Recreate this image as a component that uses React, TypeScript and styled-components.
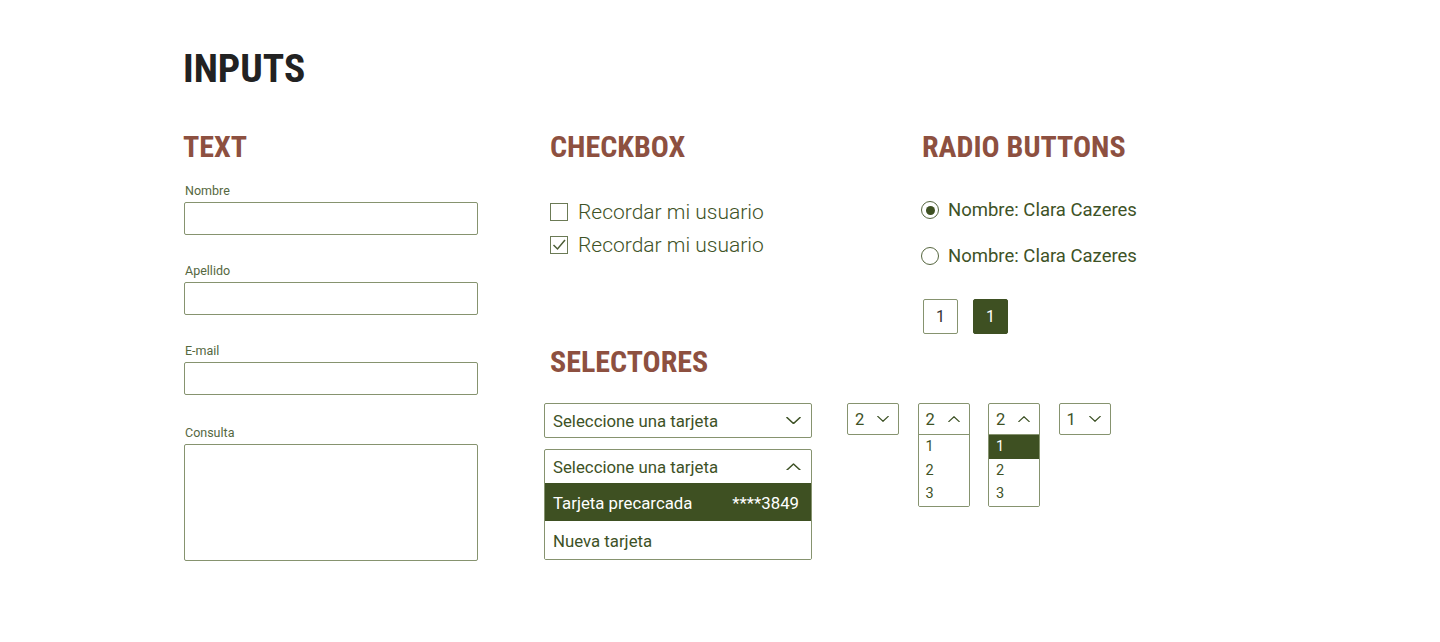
import React from "react";
import styled, { createGlobalStyle } from "styled-components";

const GREEN = "#3e5226";
const DARK = "#3e5022";
const BORDER = "#86936f";
const BROWN = "#8d5040";

const Global = createGlobalStyle`
  html, body { margin: 0; padding: 0; background: #fff; }
  body { font-family: Roboto, "Noto Sans", sans-serif; color: ${GREEN}; }
  * { box-sizing: border-box; }
`;

const Page = styled.div`
  padding: 49px 0 0 183px;
  width: 1440px;
  height: 642px;
  overflow: hidden;
`;

const Title = styled.h1`
  margin: 0;
  font-family: "Roboto Condensed", Roboto, sans-serif;
  font-weight: 700;
  font-size: 39.5px;
  line-height: 40px;
  color: #222;
`;

const Grid = styled.div`
  margin-top: 42px;
  display: grid;
  grid-template-columns: 367px 372px 1fr;
  grid-template-areas:
    "text check radio"
    "text select select";
  grid-template-rows: auto 1fr;
  row-gap: 12px;
`;

const Area = styled.section<{ $area: string }>`
  grid-area: ${(p) => p.$area};
  display: flex;
  flex-direction: column;
`;

const SectionTitle = styled.h2`
  margin: 0;
  font-family: "Roboto Condensed", Roboto, sans-serif;
  font-weight: 700;
  font-size: 30px;
  line-height: 31px;
  color: ${BROWN};
`;

const Fields = styled.div`
  margin-top: 21px;
  display: flex;
  flex-direction: column;
  gap: 28px;
  padding-left: 1px;
`;

const Field = styled.label<{ $extra?: number }>`
  display: flex;
  flex-direction: column;
  margin-top: ${(p) => p.$extra ?? 0}px;
`;

const Label = styled.span`
  font-size: 12.5px;
  line-height: 15px;
  color: #55683f;
  margin-bottom: 4px;
  padding-left: 1px;
`;

const Input = styled.input`
  width: 294px;
  height: 33px;
  border: 1px solid ${BORDER};
  border-radius: 2px;
  outline: none;
  background: #fff;
`;

const TextArea = styled.textarea`
  width: 294px;
  height: 117px;
  border: 1px solid ${BORDER};
  border-radius: 2px;
  outline: none;
  resize: none;
  background: #fff;
`;

const CheckList = styled.div`
  margin-top: 33px;
  display: flex;
  flex-direction: column;
`;

const CheckRow = styled.div`
  display: flex;
  align-items: center;
  gap: 10px;
  height: 33px;
  font-size: 21px;
  font-weight: 300;
  color: ${GREEN};
`;

const Box = styled.span`
  width: 18px;
  height: 18px;
  border: 1.5px solid #6b7a55;
  display: inline-flex;
  align-items: center;
  justify-content: center;
`;

const RadioList = styled.div`
  margin-top: 36px;
  display: flex;
  flex-direction: column;
  gap: 22px;
`;

const RadioRow = styled.div`
  display: flex;
  align-items: center;
  gap: 9px;
  height: 24px;
  font-size: 18.5px;
  color: ${GREEN};
  margin-left: -1px;
`;

const Circle = styled.span<{ $on?: boolean }>`
  width: 18px;
  height: 18px;
  border-radius: 50%;
  border: 1.5px solid #56663f;
  display: inline-flex;
  align-items: center;
  justify-content: center;
  &::after {
    content: "";
    width: 9px;
    height: 9px;
    border-radius: 50%;
    background: ${(p) => (p.$on ? DARK : "transparent")};
  }
`;

const Pager = styled.div`
  margin-top: 31px;
  display: flex;
  gap: 15px;
  padding-left: 1px;
`;

const PageBtn = styled.span<{ $active?: boolean }>`
  width: 35px;
  height: 35px;
  display: inline-flex;
  align-items: center;
  justify-content: center;
  font-size: 16px;
  border-radius: 2px;
  border: 1px solid ${(p) => (p.$active ? DARK : BORDER)};
  background: ${(p) => (p.$active ? DARK : "#fff")};
  color: ${(p) => (p.$active ? "#fff" : "#333")};
`;

const SelectRow = styled.div`
  margin-top: 26px;
  margin-left: -6px;
  display: flex;
  align-items: flex-start;
`;

const BigCol = styled.div`
  display: flex;
  flex-direction: column;
  gap: 11px;
  margin-right: 35px;
`;

const BigSelect = styled.div`
  width: 268px;
  border: 1px solid ${BORDER};
  border-radius: 2px;
  background: #fff;
  overflow: hidden;
`;

const BigHead = styled.div`
  height: 33px;
  display: flex;
  align-items: center;
  justify-content: space-between;
  padding: 0 10px 0 8px;
  font-size: 16.8px;
  color: ${GREEN};
`;

const BigOption = styled.div<{ $active?: boolean }>`
  height: 38px;
  display: flex;
  align-items: center;
  justify-content: space-between;
  padding: 0 12px 0 8px;
  font-size: 16.8px;
  background: ${(p) => (p.$active ? DARK : "#fff")};
  color: ${(p) => (p.$active ? "#fff" : GREEN)};
  border-top: 1px solid ${(p) => (p.$active ? DARK : "transparent")};
`;

const SmallGroup = styled.div`
  display: flex;
  gap: 18.5px;
  align-items: flex-start;
`;

const SmallSelect = styled.div`
  width: 52px;
  border: 1px solid ${BORDER};
  border-radius: 2px;
  background: #fff;
  overflow: hidden;
`;

const SmallHead = styled.div<{ $open?: boolean }>`
  height: ${(p) => (p.$open ? 31 : 30)}px;
  display: flex;
  align-items: center;
  justify-content: space-between;
  padding: 0 9px 0 7px;
  font-size: 16.5px;
  color: ${GREEN};
  border-bottom: ${(p) => (p.$open ? `1px solid ${BORDER}` : "none")};
`;

const SmallOption = styled.div<{ $active?: boolean }>`
  height: 23.5px;
  display: flex;
  align-items: center;
  padding-left: 7px;
  font-size: 14.5px;
  background: ${(p) => (p.$active ? DARK : "#fff")};
  color: ${(p) => (p.$active ? "#fff" : GREEN)};
`;

const Chevron = ({ up, w = 15 }: { up?: boolean; w?: number }) => (
  <svg width={w} height={w * 0.5} viewBox="0 0 16 8" fill="none">
    <path
      d={up ? "M1 7.5 L8 1 L15 7.5" : "M1 0.5 L8 7 L15 0.5"}
      stroke={GREEN}
      strokeWidth="1.6"
      strokeLinecap="round"
      strokeLinejoin="round"
    />
  </svg>
);

const Tick = () => (
  <svg width="14" height="12" viewBox="0 0 14 12" fill="none">
    <path d="M1.5 6 L5.5 10 L13 1" stroke="#4c5d36" strokeWidth="1.5" />
  </svg>
);

const SmallSel = ({
  value,
  open,
  active,
}: {
  value: string;
  open?: boolean;
  active?: number;
}) => (
  <SmallSelect>
    <SmallHead $open={open}>
      <span>{value}</span>
      <Chevron up={open} w={12} />
    </SmallHead>
    {open &&
      ["1", "2", "3"].map((o, i) => (
        <SmallOption key={o} $active={active === i}>
          {o}
        </SmallOption>
      ))}
  </SmallSelect>
);

export default function App() {
  return (
    <>
      <Global />
      <Page>
        <Title>INPUTS</Title>
        <Grid>
          <Area $area="text">
            <SectionTitle>TEXT</SectionTitle>
            <Fields>
              <Field>
                <Label>Nombre</Label>
                <Input />
              </Field>
              <Field>
                <Label>Apellido</Label>
                <Input />
              </Field>
              <Field>
                <Label>E-mail</Label>
                <Input />
              </Field>
              <Field $extra={2}>
                <Label>Consulta</Label>
                <TextArea />
              </Field>
            </Fields>
          </Area>

          <Area $area="check">
            <SectionTitle>CHECKBOX</SectionTitle>
            <CheckList>
              <CheckRow>
                <Box />
                Recordar mi usuario
              </CheckRow>
              <CheckRow>
                <Box>
                  <Tick />
                </Box>
                Recordar mi usuario
              </CheckRow>
            </CheckList>
          </Area>

          <Area $area="radio">
            <SectionTitle>RADIO BUTTONS</SectionTitle>
            <RadioList>
              <RadioRow>
                <Circle $on />
                Nombre: Clara Cazeres
              </RadioRow>
              <RadioRow>
                <Circle />
                Nombre: Clara Cazeres
              </RadioRow>
            </RadioList>
            <Pager>
              <PageBtn>1</PageBtn>
              <PageBtn $active>1</PageBtn>
            </Pager>
          </Area>

          <Area $area="select">
            <SectionTitle>SELECTORES</SectionTitle>
            <SelectRow>
              <BigCol>
                <BigSelect>
                  <BigHead>
                    <span>Seleccione una tarjeta</span>
                    <Chevron />
                  </BigHead>
                </BigSelect>
                <BigSelect>
                  <BigHead>
                    <span>Seleccione una tarjeta</span>
                    <Chevron up />
                  </BigHead>
                  <BigOption $active>
                    <span>Tarjeta precarcada</span>
                    <span>****3849</span>
                  </BigOption>
                  <BigOption>
                    <span>Nueva tarjeta</span>
                  </BigOption>
                </BigSelect>
              </BigCol>
              <SmallGroup>
                <SmallSel value="2" />
                <SmallSel value="2" open />
                <SmallSel value="2" open active={0} />
                <SmallSel value="1" />
              </SmallGroup>
            </SelectRow>
          </Area>
        </Grid>
      </Page>
    </>
  );
}
